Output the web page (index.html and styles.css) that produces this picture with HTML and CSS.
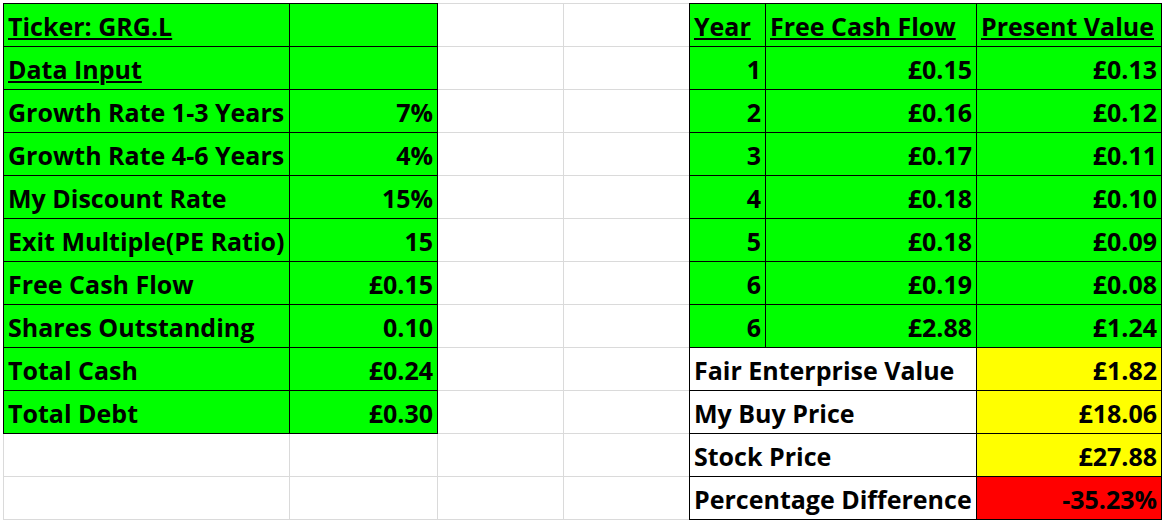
FILE: index.html
```html
<!DOCTYPE html>
<html lang="en">
<head>
<meta charset="utf-8">
<title>DCF – GRG.L</title>
<link rel="stylesheet" href="styles.css">
</head>
<body>
<div class="sheet">
  <!-- row 1 -->
  <div class="c g u">Ticker: GRG.L</div><div class="c g"></div><div class="c"></div><div class="c"></div>
  <div class="c g u">Year</div><div class="c g u">Free Cash Flow</div><div class="c g u">Present Value</div>
  <!-- row 2 -->
  <div class="c g u">Data Input</div><div class="c g"></div><div class="c"></div><div class="c"></div>
  <div class="c g n">1</div><div class="c g n">£0.15</div><div class="c g n">£0.13</div>
  <!-- row 3 -->
  <div class="c g">Growth Rate 1-3 Years</div><div class="c g n">7%</div><div class="c"></div><div class="c"></div>
  <div class="c g n">2</div><div class="c g n">£0.16</div><div class="c g n">£0.12</div>
  <!-- row 4 -->
  <div class="c g">Growth Rate 4-6 Years</div><div class="c g n">4%</div><div class="c"></div><div class="c"></div>
  <div class="c g n">3</div><div class="c g n">£0.17</div><div class="c g n">£0.11</div>
  <!-- row 5 -->
  <div class="c g">My Discount Rate</div><div class="c g n">15%</div><div class="c"></div><div class="c"></div>
  <div class="c g n">4</div><div class="c g n">£0.18</div><div class="c g n">£0.10</div>
  <!-- row 6 -->
  <div class="c g">Exit Multiple(PE Ratio)</div><div class="c g n">15</div><div class="c"></div><div class="c"></div>
  <div class="c g n">5</div><div class="c g n">£0.18</div><div class="c g n">£0.09</div>
  <!-- row 7 -->
  <div class="c g">Free Cash Flow</div><div class="c g n">£0.15</div><div class="c"></div><div class="c"></div>
  <div class="c g n">6</div><div class="c g n">£0.19</div><div class="c g n">£0.08</div>
  <!-- row 8 -->
  <div class="c g">Shares Outstanding</div><div class="c g n">0.10</div><div class="c"></div><div class="c"></div>
  <div class="c g n">6</div><div class="c g n">£2.88</div><div class="c g n">£1.24</div>
  <!-- row 9 -->
  <div class="c g">Total Cash</div><div class="c g n">£0.24</div><div class="c"></div><div class="c"></div>
  <div class="c w span2">Fair Enterprise Value</div><div class="c y n">£1.82</div>
  <!-- row 10 -->
  <div class="c g">Total Debt</div><div class="c g n">£0.30</div><div class="c"></div><div class="c"></div>
  <div class="c w span2">My Buy Price</div><div class="c y n">£18.06</div>
  <!-- row 11 -->
  <div class="c"></div><div class="c"></div><div class="c"></div><div class="c"></div>
  <div class="c w span2">Stock Price</div><div class="c y n">£27.88</div>
  <!-- row 12 -->
  <div class="c"></div><div class="c"></div><div class="c"></div><div class="c"></div>
  <div class="c w span2">Percentage Difference</div><div class="c r n">-35.23%</div>
</div>
</body>
</html>
```

FILE: styles.css
```css
html, body {
  margin: 0;
  padding: 0;
  background: #ffffff;
}

body {
  width: 1164px;
  height: 520px;
  overflow: hidden;
  font-family: "Open Sans", "Liberation Sans", sans-serif;
}

.sheet {
  margin: 3px 0 0 3px;
  padding: 1px;
  width: max-content;
  display: grid;
  grid-template-columns: 285px 147px 125px 125px 75px 210px 184px;
  grid-template-rows: repeat(12, 42px);
  gap: 1px;
  background: #dadada;
}

.c {
  background: #ffffff;
  display: flex;
  align-items: flex-end;
  padding: 0 4px 7px 4px;
  font-size: 25px;
  font-weight: 700;
  line-height: 1;
  color: #000000;
  white-space: nowrap;
  overflow: visible;
}

.g { background: #00ff00; outline: 1px solid #000; }
.y { background: #ffff00; outline: 1px solid #000; }
.r { background: #ff0000; outline: 1px solid #000; }
.w { background: #ffffff; outline: 1px solid #000; }

.n { justify-content: flex-end; }

.u {
  text-decoration: underline;
  text-decoration-thickness: 2px;
  text-underline-offset: 2px;
}

.span2 { grid-column: span 2; }
```
